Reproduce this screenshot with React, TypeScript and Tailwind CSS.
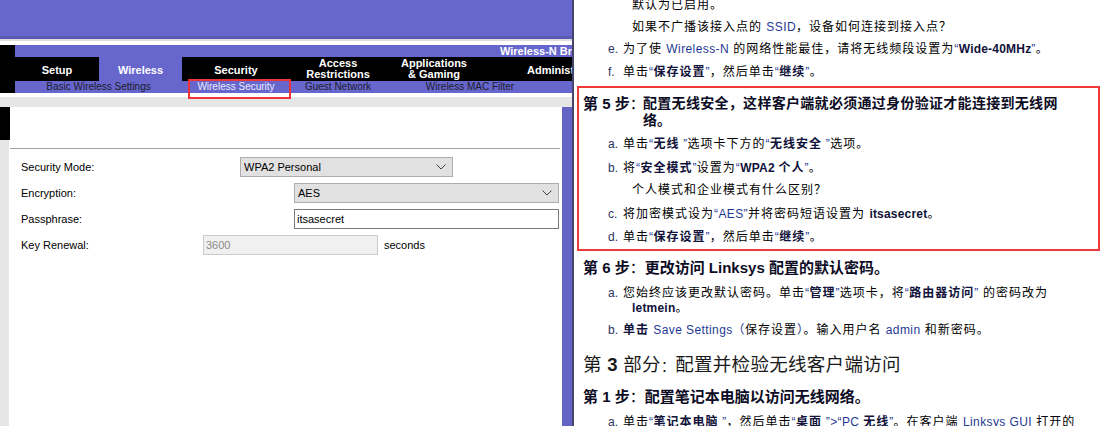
import React from "react";

const L = ({ children }: { children: React.ReactNode }) => (
  <span className="text-[#1f3a94] tracking-[0.4px]">{children}</span>
);
const B = ({ children }: { children: React.ReactNode }) => (
  <span className="font-bold text-[#10123a]">{children}</span>
);
const BL = ({ children }: { children: React.ReactNode }) => (
  <span className="font-bold text-[#10123a] tracking-[0.2px]">{children}</span>
);
const Lab = ({ children }: { children: React.ReactNode }) => (
  <span className="inline-block w-[15px] tracking-normal text-[#2b3264]">{children}</span>
);

function Chevron() {
  return (
    <svg width="10" height="6" viewBox="0 0 10 6" className="shrink-0">
      <path d="M0.5 0.5 L5 5 L9.5 0.5" fill="none" stroke="#444" strokeWidth="1" />
    </svg>
  );
}

function RouterPanel() {
  return (
    <div
      className="w-[572px] shrink-0 flex flex-col h-[426px] overflow-hidden"
      style={{ fontFamily: '"Liberation Sans", Arial, sans-serif' }}
    >
      <div className="h-[36px] bg-[#6666cc] shrink-0" />
      <div className="h-[3px] bg-[#5a5ab2] shrink-0" />
      <div className="h-[2px] bg-[#dedede] shrink-0" />
      <div className="h-[4px] bg-white shrink-0" />
      <div className="flex h-[48px] shrink-0 relative">
        <div className="w-[15px] bg-black shrink-0" />
        <div className="flex-1 flex flex-col min-w-0">
          <div className="h-[12px] bg-[#6666cc] text-white font-bold text-[11px] leading-[13px] whitespace-nowrap overflow-hidden pl-[485px]">
            Wireless-N Broadband Router
          </div>
          <div className="flex h-[24px] bg-black text-white font-bold text-[11px] leading-[11px]">
            <div className="w-[84px] shrink-0 flex items-center justify-center pt-[2px]">Setup</div>
            <div className="w-[83px] shrink-0 flex items-center justify-center bg-[#6666cc] pt-[2px]">Wireless</div>
            <div className="w-[108px] shrink-0 flex items-center justify-center pt-[2px]">Security</div>
            <div className="w-[96px] shrink-0 flex items-center justify-center text-center">
              Access
              <br />
              Restrictions
            </div>
            <div className="w-[96px] shrink-0 flex items-center justify-center text-center">
              Applications
              <br />
              &amp; Gaming
            </div>
            <div className="flex-1 flex items-center pl-[45px] whitespace-nowrap overflow-hidden pt-[2px]">
              Administration
            </div>
          </div>
          <div className="flex h-[12px] bg-[#6666cc] text-[10px] leading-[12px] whitespace-nowrap">
            <div className="w-[167px] shrink-0 text-center text-[#1c1c2c]">Basic Wireless Settings</div>
            <div className="w-[108px] shrink-0 text-center text-[#ececff]">Wireless Security</div>
            <div className="w-[96px] shrink-0 text-center text-[#1c1c2c]">Guest Network</div>
            <div className="w-[168px] shrink-0 text-center text-[#1c1c2c]">Wireless MAC Filter</div>
          </div>
        </div>
        <div className="absolute left-[188px] top-[34px] w-[103px] h-[20px] border-2 border-[#ee3434]" />
      </div>
      <div className="h-[4px] bg-white shrink-0" />
      <div className="h-[10px] bg-[#e6e6e6] shrink-0" />
      <div className="flex flex-1 min-h-0">
        <div className="w-[10px] shrink-0 flex flex-col">
          <div className="h-[33px] bg-black" />
          <div className="flex-1 bg-[#e6e6e6] mr-[1px]" />
        </div>
        <div className="flex-1 bg-white flex flex-col text-[11px] text-black">
          <div className="mt-[41px] h-[1px] bg-[#a0a0a0] mr-[2px]" />
          <div className="mt-[8px] flex items-center h-[20px]">
            <div className="w-[230px] pl-[11px] shrink-0">Security Mode:</div>
            <div className="w-[213px] h-[20px] bg-[#e1e1e1] border border-[#adadad] flex items-center justify-between pl-[3px] pr-[6px]">
              <span>WPA2 Personal</span>
              <Chevron />
            </div>
          </div>
          <div className="mt-[6px] flex items-center h-[20px]">
            <div className="w-[284px] pl-[11px] shrink-0">Encryption:</div>
            <div className="w-[265px] h-[20px] bg-[#e1e1e1] border border-[#adadad] flex items-center justify-between pl-[3px] pr-[6px]">
              <span>AES</span>
              <Chevron />
            </div>
          </div>
          <div className="mt-[6px] flex items-center h-[20px]">
            <div className="w-[284px] pl-[11px] shrink-0">Passphrase:</div>
            <div className="w-[265px] h-[20px] bg-white border border-[#7a7a7a] flex items-center pl-[2px]">
              itsasecret
            </div>
          </div>
          <div className="mt-[6px] flex items-center h-[20px]">
            <div className="w-[193px] pl-[11px] shrink-0">Key Renewal:</div>
            <div className="w-[175px] h-[20px] bg-[#f0f0f0] border border-[#cccccc] flex items-center pl-[2px] text-[#8a8a8a]">
              3600
            </div>
            <div className="ml-[6px]">seconds</div>
          </div>
        </div>
        <div className="w-[10px] shrink-0 bg-[#6464c4]" />
      </div>
    </div>
  );
}

function DocPanel() {
  const body = "text-[12px] leading-[15px] tracking-[1px] whitespace-nowrap text-black";
  const head = "text-[15px] leading-[17px] tracking-[0px] whitespace-nowrap font-bold text-[#0c0c24]";
  return (
    <div
      className="flex-1 min-w-0 h-[426px] overflow-hidden bg-white flex flex-col"
      style={{ fontFamily: '"Liberation Sans", Arial, "Noto Sans CJK SC", sans-serif' }}
    >
      <div className={`${body} mt-[-2px] pl-[58px] shrink-0`}>默认为已启用。</div>
      <div className={`${body} mt-[7px] pl-[58px] shrink-0`}>
        如果不广播该接入点的 <L>SSID</L>，设备如何连接到接入点？
      </div>
      <div className={`${body} mt-[7px] pl-[34px] shrink-0`}>
        <Lab>e.</Lab>为了使 <L>Wireless-N</L> 的网络性能最佳，请将无线频段设置为<L>“</L>
        <BL>Wide-40MHz</BL>
        <L>”</L>。
      </div>
      <div className={`${body} mt-[8px] pl-[34px] shrink-0`}>
        <Lab>f.</Lab>单击<L>“</L>
        <B>保存设置</B>
        <L>”</L>，然后单击<L>“</L>
        <B>继续</B>
        <L>”</L>。
      </div>
      <div className="mt-[6px] ml-[3px] w-[523px] border-2 border-[#f03a3a] pb-[4px] shrink-0">
        <div className={`${head} pt-[7px] pl-[4px]`}>
          <div className="flex">
            <span className="w-[60px] shrink-0">
              第 5 步<span className="font-normal">：</span>
            </span>
            <span className="text-[14px] tracking-[0.3px]">配置无线安全，这样客户端就必须通过身份验证才能连接到无线网</span>
          </div>
          <div className="pl-[60px] text-[14px]">络。</div>
        </div>
        <div className={`${body} mt-[8px] pl-[29px]`}>
          <Lab>a.</Lab>单击<L>“</L>
          <B>无线</B>
          <L> ”</L>选项卡下方的<L>“</L>
          <B>无线安全</B>
          <L> ”</L>选项。
        </div>
        <div className={`${body} mt-[9px] pl-[29px]`}>
          <Lab>b.</Lab>将<L>“</L>
          <B>安全模式</B>
          <L>”</L>设置为<L>“</L>
          <BL>WPA2 </BL>
          <B>个人</B>
          <L>”</L>。
        </div>
        <div className={`${body} mt-[7px] pl-[53px]`}>个人模式和企业模式有什么区别？</div>
        <div className={`${body} mt-[9px] pl-[29px]`}>
          <Lab>c.</Lab>将加密模式设为<L>“AES”</L>并将密码短语设置为 <BL>itsasecret</BL>。
        </div>
        <div className={`${body} mt-[8px] pl-[29px]`}>
          <Lab>d.</Lab>单击<L>“</L>
          <B>保存设置</B>
          <L>”</L>，然后单击<L>“</L>
          <B>继续</B>
          <L>”</L>。
        </div>
      </div>
      <div className={`${head} mt-[8px] pl-[9px] shrink-0`}>
        第 6 步<span className="font-normal">：</span>更改访问 Linksys 配置的默认密码。
      </div>
      <div className={`${body} mt-[10px] pl-[34px] shrink-0`}>
        <Lab>a.</Lab>您始终应该更改默认密码。单击<L>“</L>
        <B>管理</B>
        <L>”</L>选项卡，将<L>“</L>
        <B>路由器访问</B>
        <L>”</L> 的密码改为
        <br />
        <span className="inline-block w-[24px]" />
        <BL>letmein</BL>。
      </div>
      <div className={`${body} mt-[7px] pl-[34px] shrink-0`}>
        <Lab>b.</Lab>
        <B>单击</B> <L>Save Settings（</L>保存设置<L>）</L>。输入用户名 <L>admin</L> 和新密码。
      </div>
      <div className="mt-[15px] pl-[9px] text-[18.5px] leading-[24px] tracking-[0.3px] whitespace-nowrap text-[#1a1a1a] shrink-0">
        第 <span className="font-bold">3</span> 部分<span className="text-[14px]">：</span>配置并检验无线客户端访问
      </div>
      <div className={`${head} mt-[10px] pl-[9px] shrink-0`}>
        第 1 步<span className="font-normal">：</span>配置笔记本电脑以访问无线网络。
      </div>
      <div className={`${body} mt-[10px] pl-[34px] shrink-0`}>
        <Lab>a.</Lab>单击<L>“</L>
        <B>笔记本电脑</B>
        <L> ”</L>，然后单击<L>“</L>
        <B>桌面</B>
        <L> ”&gt;“PC </L>
        <B>无线</B>
        <L>”</L>。在客户端 <L>Linksys GUI</L> 打开的
      </div>
    </div>
  );
}

export default function App() {
  return (
    <div className="w-[1105px] h-[426px] flex overflow-hidden bg-white">
      <RouterPanel />
      <div className="w-[2px] shrink-0 bg-[#46466c]" />
      <DocPanel />
    </div>
  );
}
